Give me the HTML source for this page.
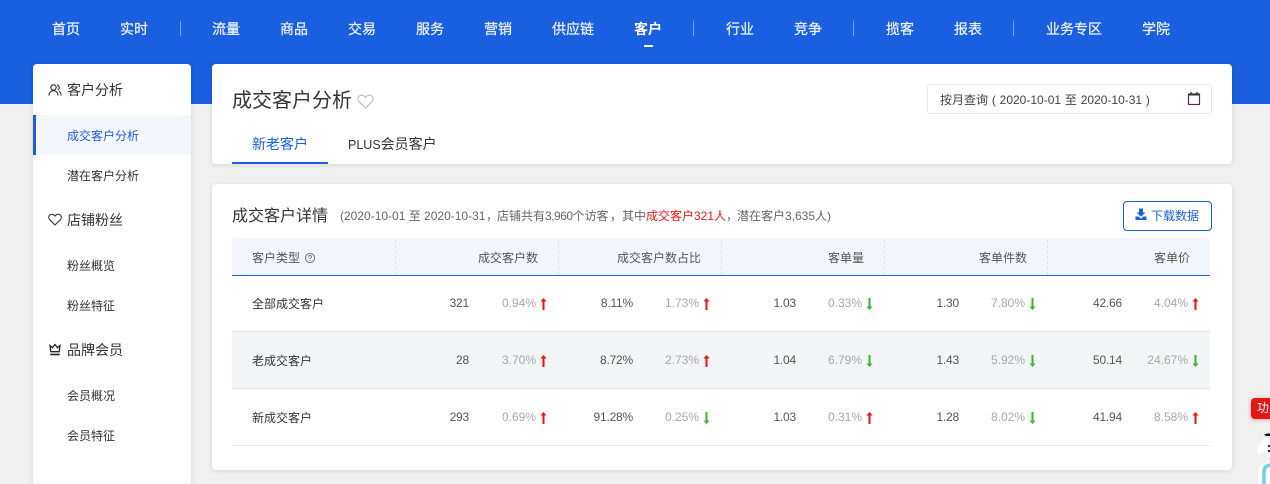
<!DOCTYPE html>
<html lang="zh"><head><meta charset="utf-8">
<style>
html,body{margin:0;padding:0;width:1270px;height:484px;overflow:hidden}
body{position:relative;background:#f0f0f0;font-family:"Liberation Sans","Noto Sans CJK SC",sans-serif;font-size:12px;color:#333}
#w{position:absolute;left:0;top:0;width:1270px;height:484px;overflow:hidden}
.a{position:absolute;white-space:nowrap}
.t{position:absolute;white-space:nowrap;line-height:20px;height:20px}
.r{position:absolute;white-space:nowrap;line-height:20px;height:20px;text-align:right;width:100px}
.n{color:#fff;font-size:14px;line-height:20px;top:19px;position:absolute;white-space:nowrap;opacity:.92;-webkit-text-stroke:.25px #fff}
.s{position:absolute;top:21px;width:1px;height:15px;background:#7da3ee}
.card{position:absolute;background:#fff;border-radius:4px;box-shadow:0 1px 6px rgba(0,0,0,.1)}
.v{color:#555;letter-spacing:-.2px}.p{color:#a8a8a8}
.col{position:absolute;top:240px;height:35px;border-left:1px dashed #dfe3ea}
.line{position:absolute;left:232px;width:978px;height:1px;background:#e3e5e8}
svg{position:absolute;display:block}
.g{color:#666}.d{color:#f01818}
</style></head><body><div id="w">
<div class="a" style="left:0;top:0;width:1270px;height:104px;background:#1a5fe0"></div>
<span class="n" style="left:52px">首页</span>
<span class="n" style="left:120px">实时</span>
<i class="s" style="left:180px"></i>
<span class="n" style="left:212px">流量</span>
<span class="n" style="left:280px">商品</span>
<span class="n" style="left:348px">交易</span>
<span class="n" style="left:416px">服务</span>
<span class="n" style="left:484px">营销</span>
<span class="n" style="left:552px">供应链</span>
<span class="n" style="left:634px;font-weight:bold;opacity:1;-webkit-text-stroke:0">客户</span>
<i class="a" style="left:644px;top:45px;width:9px;height:2px;background:#fff"></i>
<i class="s" style="left:693px"></i>
<span class="n" style="left:726px">行业</span>
<span class="n" style="left:794px">竞争</span>
<i class="s" style="left:853px"></i>
<span class="n" style="left:886px">揽客</span>
<span class="n" style="left:954px">报表</span>
<i class="s" style="left:1013px"></i>
<span class="n" style="left:1046px">业务专区</span>
<span class="n" style="left:1142px">学院</span>

<!-- sidebar -->
<div class="card" style="left:33px;top:64px;width:158px;height:430px"></div>
<div class="a" style="left:33px;top:115px;width:158px;height:40px;background:#f3f6fd"></div>
<div class="a" style="left:33px;top:115px;width:3px;height:40px;background:#1a5fe0"></div>
<svg style="left:48px;top:84px" width="14" height="13" viewBox="0 0 14 13" fill="none" stroke="#333" stroke-width="1.1"><circle cx="5.5" cy="3.5" r="2.7"/><path d="M1 11.5c0-3 2-4.8 4.5-4.8S10 8.500 10 11.500M9 .9c1.500.3 2.300 1.400 2.300 2.700 0 1-.6 2-1.500 2.400M11 7.200c1.300.6 2 2.200 2 4.300"/></svg>
<span class="t" style="left:67px;top:80px;font-size:14px">客户分析</span>
<span class="t" style="left:67px;top:126px;color:#1a5fe0">成交客户分析</span>
<span class="t" style="left:67px;top:166px">潜在客户分析</span>
<svg style="left:48px;top:213px" width="14" height="13" viewBox="0 0 14 13" fill="none" stroke="#333" stroke-width="1.1"><path d="M7 12L1.800 6.800C.2 5.200.4 3 1.800 1.900 3.300.8 5.500 1.100 7 3c1.500-1.900 3.700-2.200 5.200-1.100 1.400 1.100 1.600 3.300 0 4.900z"/></svg>
<span class="t" style="left:67px;top:210px;font-size:14px">店铺粉丝</span>
<span class="t" style="left:67px;top:256px">粉丝概览</span>
<span class="t" style="left:67px;top:296px">粉丝特征</span>
<svg style="left:48px;top:343px" width="14" height="13" viewBox="0 0 14 13" fill="none" stroke="#222" stroke-width="1.300"><path d="M2 2.500L2.800 8.700H11.200L12 2.500L9.500 4.700L7 1.500L4.500 4.700Z"/><path d="M2.300 11.500H11.700" stroke-width="1.600"/></svg>
<span class="t" style="left:67px;top:340px;font-size:14px">品牌会员</span>
<span class="t" style="left:67px;top:386px">会员概况</span>
<span class="t" style="left:67px;top:426px">会员特征</span>

<!-- top card -->
<div class="card" style="left:212px;top:64px;width:1020px;height:100px"></div>
<span class="a" style="left:232px;top:87px;font-size:20px;line-height:28px;color:#333">成交客户分析</span>
<svg style="left:357px;top:94px" width="17" height="15" viewBox="0 0 17 15" fill="none" stroke="#b9bcc4" stroke-width="1.100"><path d="M8.500 14L2.200 7.800C.4 6 .6 3.400 2.200 2 4 .7 6.800 1 8.500 3.300 10.200 1 13 .7 14.800 2c1.600 1.400 1.800 4 0 5.800z"/></svg>
<div class="a" style="left:927px;top:84px;width:283px;height:28px;border:1px solid #e8e8ea;border-radius:3px;background:#fff"></div>
<span class="t" style="left:940px;top:90px;color:#444;word-spacing:.5px">按月查询 ( 2020-10-01 至 2020-10-31 )</span>
<svg style="left:1187px;top:91px" width="14" height="15" viewBox="0 0 14 15" fill="none"><rect x="1.500" y="3" width="11" height="10.500" stroke="#5a2a66" stroke-width="1.200"/><path d="M1.500 3.500h11" stroke="#333" stroke-width="2"/><path d="M4 1v3.500M10 1v3.500" stroke="#333" stroke-width="1.300"/></svg>
<span class="t" style="left:252px;top:134px;font-size:14px;color:#1a5fe0">新老客户</span>
<span class="t" style="left:348px;top:134px;font-size:14px;color:#333"><span style="font-size:12.500px">PLUS</span>会员客户</span>
<div class="a" style="left:232px;top:162px;width:96px;height:2px;background:#1a5fe0"></div>

<!-- detail card -->
<div class="card" style="left:212px;top:184px;width:1020px;height:286px"></div>
<span class="a" style="left:232px;top:205px;font-size:16px;line-height:24px;color:#333">成交客户详情</span>
<span class="t g" style="left:340px;top:206px">(2020-10-01 至 2020-10-31</span>
<span class="t g" style="left:486px;top:206px">，</span>
<span class="t g" style="left:497px;top:206px">店铺共有<span style="letter-spacing:-.5px">3,960</span>个访客</span>
<span class="t g" style="left:610px;top:206px">，</span>
<span class="t g" style="left:622px;top:206px">其中</span>
<span class="t d" style="left:646px;top:206px">成交客户321人</span>
<span class="t g" style="left:726px;top:206px">，</span>
<span class="t g" style="left:737px;top:206px">潜在客户3,635人)</span>
<div class="a" style="left:1123px;top:201px;width:87px;height:28px;border:1px solid #1a5fe0;border-radius:4px;background:#fff"></div>
<svg style="left:1135px;top:208px" width="12" height="13" viewBox="0 0 12 13" fill="#1a5fe0"><path d="M4 0.500H8V4.500H10.500L6 8.800 1.500 4.500H4Z"/><path d="M0.500 8.500H3.500L6 10.800 8.500 8.500H11.500V12H0.500Z"/></svg>
<span class="t" style="left:1151px;top:206px;color:#1a5fe0">下载数据</span>

<div class="a" style="left:232px;top:238px;width:978px;height:37px;background:#f3f6fd"></div>
<div class="a" style="left:232px;top:275px;width:978px;height:1px;background:#1a5fe0"></div>
<i class="col" style="left:395px"></i><i class="col" style="left:558px"></i><i class="col" style="left:721px"></i><i class="col" style="left:884px"></i><i class="col" style="left:1047px"></i>
<span class="t" style="left:252px;top:248px;color:#555">客户类型</span>
<svg style="left:304px;top:252px" width="12" height="12" viewBox="0 0 12 12" fill="none" stroke="#777"><circle cx="6" cy="6" r="4.600"/><path d="M4.500 4.800C4.500 3.900 5.200 3.500 6 3.500c.9 0 1.500.5 1.500 1.300 0 1.100-1.500 1.100-1.500 2.200" stroke-width=".9"/><path d="M6 8v1" stroke-width=".9"/></svg>
<span class="r" style="left:438px;top:248px;color:#555">成交客户数</span>
<span class="r" style="left:601px;top:248px;color:#555">成交客户数占比</span>
<span class="r" style="left:764px;top:248px;color:#555">客单量</span>
<span class="r" style="left:927px;top:248px;color:#555">客单件数</span>
<span class="r" style="left:1090px;top:248px;color:#555">客单价</span>

<div class="a" style="left:232px;top:332px;width:978px;height:56px;background:#f4f5f7"></div>
<div class="line" style="top:331px"></div>
<div class="line" style="top:388px"></div>
<div class="line" style="top:445px"></div>

<span class="t" style="left:252px;top:294px">全部成交客户</span>
<span class="t" style="left:252px;top:351px">老成交客户</span>
<span class="t" style="left:252px;top:408px">新成交客户</span>

<!-- row 1 -->
<span class="r v" style="left:369px;top:293px">321</span><span class="r p" style="left:436px;top:293px">0.94%</span>
<span class="r v" style="left:533px;top:293px">8.11%</span><span class="r p" style="left:599px;top:293px">1.73%</span>
<span class="r v" style="left:696px;top:293px">1.03</span><span class="r p" style="left:762px;top:293px">0.33%</span>
<span class="r v" style="left:859px;top:293px">1.30</span><span class="r p" style="left:925px;top:293px">7.80%</span>
<span class="r v" style="left:1022px;top:293px">42.66</span><span class="r p" style="left:1088px;top:293px">4.04%</span>
<!-- row 2 -->
<span class="r v" style="left:369px;top:350px">28</span><span class="r p" style="left:436px;top:350px">3.70%</span>
<span class="r v" style="left:533px;top:350px">8.72%</span><span class="r p" style="left:599px;top:350px">2.73%</span>
<span class="r v" style="left:696px;top:350px">1.04</span><span class="r p" style="left:762px;top:350px">6.79%</span>
<span class="r v" style="left:859px;top:350px">1.43</span><span class="r p" style="left:925px;top:350px">5.92%</span>
<span class="r v" style="left:1022px;top:350px">50.14</span><span class="r p" style="left:1088px;top:350px">24.67%</span>
<!-- row 3 -->
<span class="r v" style="left:369px;top:407px">293</span><span class="r p" style="left:436px;top:407px">0.69%</span>
<span class="r v" style="left:533px;top:407px">91.28%</span><span class="r p" style="left:599px;top:407px">0.25%</span>
<span class="r v" style="left:696px;top:407px">1.03</span><span class="r p" style="left:762px;top:407px">0.31%</span>
<span class="r v" style="left:859px;top:407px">1.28</span><span class="r p" style="left:925px;top:407px">8.02%</span>
<span class="r v" style="left:1022px;top:407px">41.94</span><span class="r p" style="left:1088px;top:407px">8.58%</span>

<!-- arrows -->
<svg style="left:0;top:0" width="1270" height="484" viewBox="0 0 1270 484">
<g fill="#f01010">
<path d="M540.500 301.500L543.500 298 546.500 301.500H544.500V310H542.500V301.500Z"/>
<path d="M703.500 301.500L706.500 298 709.500 301.500H707.500V310H705.500V301.500Z"/>
<path d="M1192.500 301.500L1195.500 298 1198.500 301.500H1196.500V310H1194.500V301.500Z"/>
<path d="M540.500 358.500L543.500 355 546.500 358.500H544.500V367H542.500V358.500Z"/>
<path d="M703.500 358.500L706.500 355 709.500 358.500H707.500V367H705.500V358.500Z"/>
<path d="M540.500 415.500L543.500 412 546.500 415.500H544.500V424H542.500V415.500Z"/>
<path d="M866.500 415.500L869.500 412 872.500 415.500H870.500V424H868.500V415.500Z"/>
<path d="M1192.500 415.500L1195.500 412 1198.500 415.500H1196.500V424H1194.500V415.500Z"/>
</g>
<g fill="#34b82c">
<path d="M866.500 306.500L869.500 310 872.500 306.500H870.500V298H868.500V306.500Z"/>
<path d="M1029.500 306.500L1032.500 310 1035.500 306.500H1033.500V298H1031.500V306.500Z"/>
<path d="M866.500 363.500L869.500 367 872.500 363.500H870.500V355H868.500V363.500Z"/>
<path d="M1029.500 363.500L1032.500 367 1035.500 363.500H1033.500V355H1031.500V363.500Z"/>
<path d="M1192.500 363.500L1195.500 367 1198.500 363.500H1196.500V355H1194.500V363.500Z"/>
<path d="M703.500 420.500L706.500 424 709.500 420.500H707.500V412H705.500V420.500Z"/>
<path d="M1029.500 420.500L1032.500 424 1035.500 420.500H1033.500V412H1031.500V420.500Z"/>
</g>
</svg>

<!-- floating helper -->
<div class="a" style="left:1251px;top:398px;width:24px;height:21px;background:#e01818;border-radius:4px;box-shadow:0 1px 4px rgba(224,24,24,.35)"></div>
<span class="t" style="left:1257px;top:398px;color:#fff;font-size:12px">功</span>
<svg style="left:1250px;top:425px" width="20" height="59" viewBox="0 0 20 59">
<path d="M14 9.500L17 8.500H20V11H16Z" fill="#111"/>
<path d="M20 13H15Q12 15 11 18L8 21Q6 25 8 28Q12 29 15 26Q18 30 20 32Z" fill="#fff"/>
<rect x="18" y="20" width="2" height="2" fill="#222"/>
<rect x="18" y="25" width="2" height="2" fill="#222"/>
<path d="M8 59V44Q10 38 20 37V59Z" fill="#fff"/>
<path d="M14 59V47Q14 41 20 40" fill="none" stroke="#6fd0e6" stroke-width="3.500"/>
</svg>
</div></body></html>
